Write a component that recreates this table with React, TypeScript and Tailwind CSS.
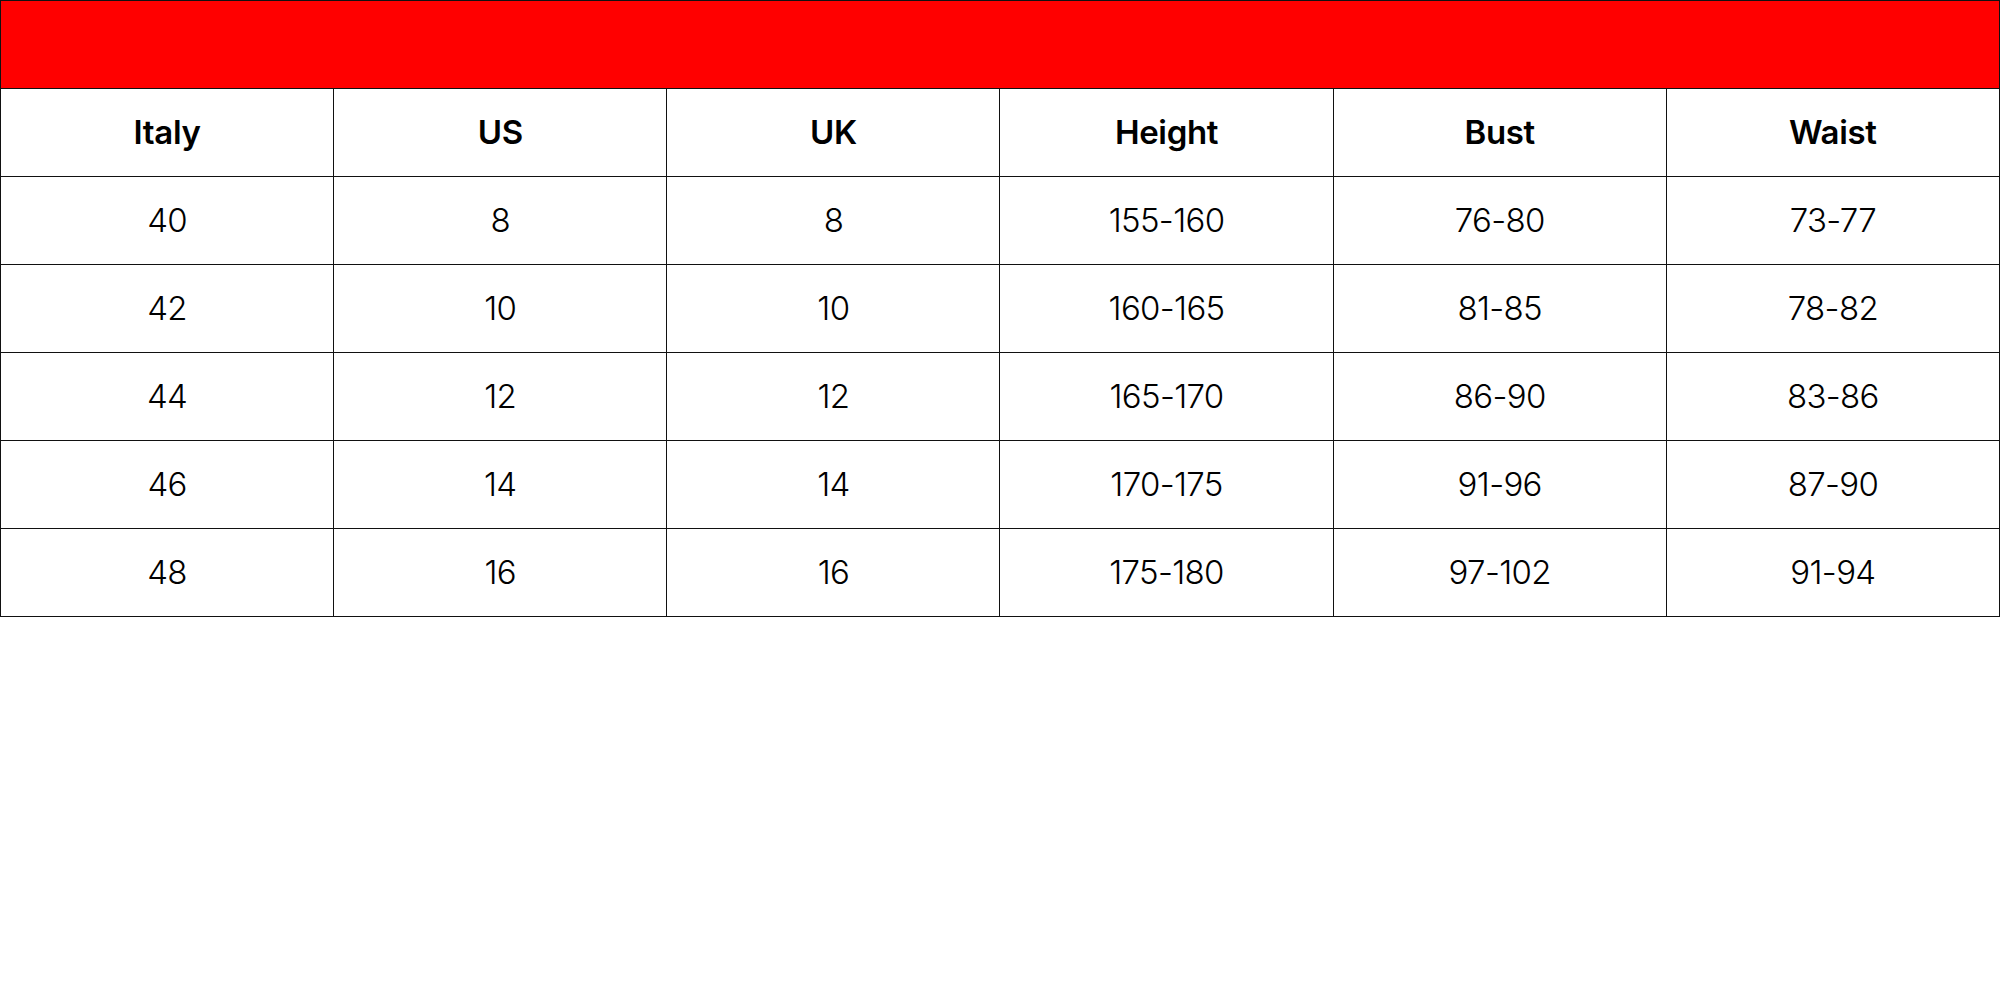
const HEADERS = ['Italy', 'US', 'UK', 'Height', 'Bust', 'Waist'];

const ROWS: string[][] = [
  ['40', '8', '8', '155-160', '76-80', '73-77'],
  ['42', '10', '10', '160-165', '81-85', '78-82'],
  ['44', '12', '12', '165-170', '86-90', '83-86'],
  ['46', '14', '14', '170-175', '91-96', '87-90'],
  ['48', '16', '16', '175-180', '97-102', '91-94'],
];

export default function App() {
  return (
    <div className="w-[2000px] h-[1000px] bg-white font-['Inter',sans-serif] text-black">
      <table className="w-[2000px] table-fixed border-collapse">
        <thead>
          <tr>
            <th colSpan={6} className="h-[88px] bg-[#ff0000] border border-[#111]" />
          </tr>
          <tr>
            {HEADERS.map((h) => (
              <th
                key={h}
                className="h-[88px] border border-[#111] text-[33px] font-semibold text-center align-middle tracking-[-0.01em]"
              >
                {h}
              </th>
            ))}
          </tr>
        </thead>
        <tbody>
          {ROWS.map((row, i) => (
            <tr key={i}>
              {row.map((cell, j) => (
                <td
                  key={j}
                  className="h-[88px] border border-[#111] text-[33px] font-light text-center align-middle tracking-[-0.02em]"
                >
                  {cell}
                </td>
              ))}
            </tr>
          ))}
        </tbody>
      </table>
    </div>
  );
}
